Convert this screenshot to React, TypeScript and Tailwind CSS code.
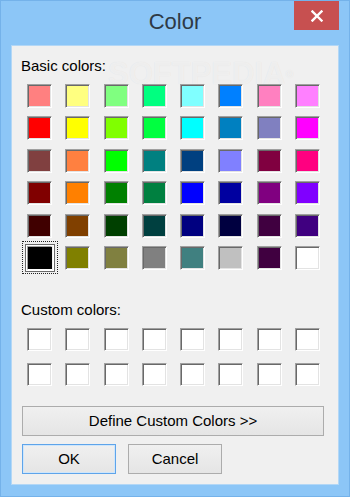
import React from "react";

const basic: string[][] = [
  ["#FF8080", "#FFFF80", "#80FF80", "#00FF80", "#80FFFF", "#0080FF", "#FF80C0", "#FF80FF"],
  ["#FF0000", "#FFFF00", "#80FF00", "#00FF40", "#00FFFF", "#0080C0", "#8080C0", "#FF00FF"],
  ["#804040", "#FF8040", "#00FF00", "#008080", "#004080", "#8080FF", "#800040", "#FF0080"],
  ["#800000", "#FF8000", "#008000", "#008040", "#0000FF", "#0000A0", "#800080", "#8000FF"],
  ["#400000", "#804000", "#004000", "#004040", "#000080", "#000040", "#400040", "#400080"],
  ["#000000", "#808000", "#808040", "#808080", "#408080", "#C0C0C0", "#400040", "#FFFFFF"],
];

function Swatch({ color, h, selected }: { color: string; h: string; selected?: boolean }) {
  return (
    <div className={`relative w-[25px] ${h}`}>
      <div
        className="w-full h-full border border-t-[#a0a0a0] border-l-[#a0a0a0] border-r-white border-b-white shadow-[inset_1px_1px_0_#696969,inset_-1px_-1px_0_#e3e3e3]"
        style={{ backgroundColor: color }}
      />
      {selected && (
        <>
          <div className="absolute -left-[2px] -top-[2px] w-[30px] h-[28px] border border-[#6a6a6a] shadow-[inset_0_0_0_1px_#ffffff] pointer-events-none" />
          <div className="absolute left-[1px] top-[1px] w-[24px] h-[22px] border-2 border-black bg-black" />
          <div className="absolute -left-[5px] -top-[5px] w-[36px] h-[33px] border border-dotted border-[#222]" />
        </>
      )}
    </div>
  );
}

export default function App() {
  return (
    <div className="w-[350px] h-[497px] bg-[#8cc6f7] border border-[#74b2ea] flex flex-col relative font-['Liberation_Sans',Arial,sans-serif] text-black overflow-hidden">
      <div className="h-[44px] shrink-0 relative flex justify-center">
        <div className="pt-[8px] text-[22px] leading-[26px] text-[#2e3a46]">Color</div>
        <div className="absolute right-[10px] top-0 w-[45px] h-[29px] bg-[#c75050] flex items-center justify-center">
          <svg width="12" height="12" viewBox="0 0 12 12">
            <path d="M1.5 1.5 L10.5 10.5 M10.5 1.5 L1.5 10.5" stroke="#ffffff" strokeWidth="2.4" strokeLinecap="square" />
          </svg>
        </div>
      </div>
      <div className="relative mx-[10px] mb-[11px] flex-1 bg-[#f0f0f0] border border-[#b3d7f6] flex flex-col">
        <div className="absolute left-[96px] top-[10px] text-[31px] font-bold leading-[36px] text-white/50 select-none whitespace-nowrap [text-shadow:0_0_1px_rgba(0,0,0,0.08)]">
          SOFTPEDIA<span className="text-[11px] align-top">®</span>
        </div>
        <div className="relative ml-[9px] mt-[11px] text-[15px] leading-[17px]">Basic colors:</div>
        <div className="relative ml-[15px] mt-[10px] w-[293px] flex flex-col gap-y-[8.4px]">
          {basic.map((row, ri) => (
            <div key={ri} className="flex justify-between">
              {row.map((c, ci) => (
                <Swatch key={ci} color={c} h="h-[24px]" selected={ri === 5 && ci === 0} />
              ))}
            </div>
          ))}
        </div>
        <div className="ml-[9px] mt-[31px] text-[15px] leading-[17px]">Custom colors:</div>
        <div className="ml-[15px] mt-[10px] w-[293px] flex flex-col gap-y-[12px]">
          {[0, 1].map((r) => (
            <div key={r} className="flex justify-between">
              {Array.from({ length: 8 }).map((_, i) => (
                <Swatch key={i} color="#FFFFFF" h="h-[23px]" />
              ))}
            </div>
          ))}
        </div>
        <div className="ml-[10px] mt-[20px] w-[302px] h-[30px] border border-[#acacac] bg-gradient-to-b from-[#f0f0f0] to-[#e5e5e5] flex items-center justify-center text-[15px]">
          Define Custom Colors &gt;&gt;
        </div>
        <div className="ml-[10px] mt-[8px] flex gap-[12px]">
          <div className="w-[94px] h-[30px] border border-[#5ea4ea] shadow-[inset_0_0_0_1px_#cfe6fb] bg-gradient-to-b from-[#f0f0f0] to-[#e5e5e5] flex items-center justify-center text-[15px]">
            OK
          </div>
          <div className="w-[94px] h-[30px] border border-[#acacac] bg-gradient-to-b from-[#f0f0f0] to-[#e5e5e5] flex items-center justify-center text-[15px]">
            Cancel
          </div>
        </div>
      </div>
    </div>
  );
}
